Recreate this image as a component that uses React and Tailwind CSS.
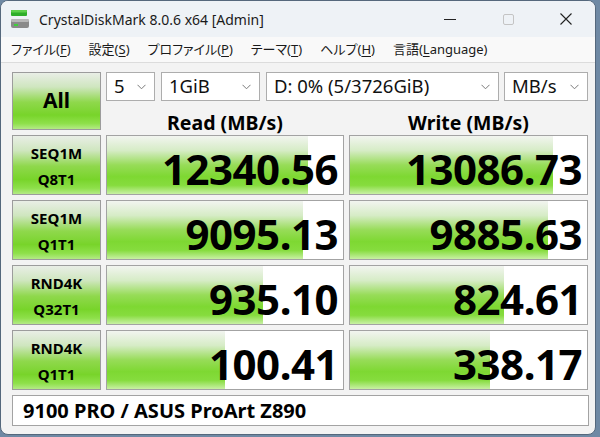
const rows = [
  { a: "SEQ1M", b: "Q8T1", read: "12340.56", rf: 0.85, write: "13086.73", wf: 0.856 },
  { a: "SEQ1M", b: "Q1T1", read: "9095.13", rf: 0.83, write: "9885.63", wf: 0.835 },
  { a: "RND4K", b: "Q32T1", read: "935.10", rf: 0.66, write: "824.61", wf: 0.65 },
  { a: "RND4K", b: "Q1T1", read: "100.41", rf: 0.5, write: "338.17", wf: 0.59 },
];

const menu = [
  ["ファイル(", "F", ")"],
  ["設定(", "S", ")"],
  ["プロファイル(", "P", ")"],
  ["テーマ(", "T", ")"],
  ["ヘルプ(", "H", ")"],
  ["言語(", "L", "anguage)"],
];

function Chevron() {
  return (
    <svg width="9" height="6" viewBox="0 0 9 6" className="shrink-0">
      <path d="M0.5 0.8 L4.5 4.8 L8.5 0.8" fill="none" stroke="#7a7a7a" strokeWidth="1" />
    </svg>
  );
}

function Select({ w, label }) {
  return (
    <div
      className={`${w} h-[29px] bg-white border border-[#adadad] flex items-center justify-between pl-[7px] pr-[8px] text-[18.5px] leading-none text-[#111]`}
    >
      <span>{label}</span>
      <Chevron />
    </div>
  );
}

function Cell({ value, frac }) {
  return (
    <div className="relative h-[60px] bg-white border border-[#a3a3a3] overflow-hidden">
      <div
        className="absolute left-0 top-0 bottom-0 bg-[linear-gradient(180deg,#f2f5f0_0%,#d6ecc6_25%,#97dc58_50%,#7ed832_70%,#86dc3e_85%,#c8f0a4_100%)]"
        style={{ width: `${frac * 100}%` }}
      />
      <div className="relative h-full flex items-center justify-end pr-[5px] pt-[7px] text-[42px] font-bold leading-none text-black tracking-[-0.5px]">
        {value}
      </div>
    </div>
  );
}

function GreenBox({ children, className = "" }) {
  return (
    <div
      className={`border border-[#9c9c9c] bg-[linear-gradient(180deg,#e9eee6_0%,#cfe6bf_25%,#8fd84c_52%,#78d42a_75%,#8ee04a_90%,#b4ea86_100%)] flex flex-col items-center justify-center text-black font-bold ${className}`}
    >
      {children}
    </div>
  );
}

export default function App() {
  return (
    <div className="w-[600px] h-[437px] bg-[#6f89a4] overflow-hidden font-['Noto_Sans','Noto_Sans_CJK_JP',sans-serif]">
      <div className="w-[596px] h-[435px] rounded-[8px] border border-[#55687c] bg-[#f3f3f3] overflow-hidden flex flex-col">
        {/* title bar */}
        <div className="h-[36px] bg-[#eef2f6] flex items-center pl-[9px] shrink-0">
          <svg width="20" height="20" viewBox="0 0 20 20" className="shrink-0">
            <rect x="1" y="1" width="16" height="6" rx="1" fill="#2fae2a" />
            <rect x="1" y="1" width="16" height="2.5" rx="1" fill="#5fd04c" />
            <rect x="1" y="10" width="18" height="9" rx="2" fill="#8a8a8a" />
            <rect x="1" y="10" width="18" height="3" rx="1.5" fill="#b8b8b8" />
            <rect x="4" y="15" width="4" height="2" fill="#3fcf3a" />
          </svg>
          <span className="ml-[9px] text-[14px] text-[#1a1a1a]">CrystalDiskMark 8.0.6 x64 [Admin]</span>
          <div className="ml-auto flex items-center h-full">
            <div className="w-[58px] h-full flex items-center justify-center">
              <div className="w-[12px] h-[1px] bg-[#222]" />
            </div>
            <div className="w-[58px] h-full flex items-center justify-center">
              <div className="w-[11px] h-[11px] border border-[#c4c4c4] rounded-[2px]" />
            </div>
            <div className="w-[58px] h-full flex items-center justify-center">
              <svg width="12" height="12" viewBox="0 0 12 12">
                <path d="M0.5 0.5 L11.5 11.5 M11.5 0.5 L0.5 11.5" stroke="#222" strokeWidth="1.1" />
              </svg>
            </div>
          </div>
        </div>

        {/* menu */}
        <div className="h-[26px] bg-[#f9f9f9] border-b border-[#dcdcdc] flex items-center gap-[18px] pl-[10px] text-[13px] text-[#1a1a1a] shrink-0 [font-feature-settings:'palt']">
          {menu.map(([pre, key, post]) => (
            <span key={pre}>
              {pre}
              <span className="underline underline-offset-2">{key}</span>
              {post}
            </span>
          ))}
        </div>

        {/* content */}
        <div className="pl-[11px] pt-[9px] flex flex-col gap-[5px]">
          <div className="grid grid-cols-[89px_238px_239px] gap-x-[5px] gap-y-[5px] grid-rows-[58px_60px_60px_60px_60px]">
            <GreenBox className="h-[58px] text-[21px]">All</GreenBox>
            <div className="col-span-2 flex flex-col">
              <div className="flex">
                <Select w="w-[49px]" label="5" />
                <div className="w-[6px]" />
                <Select w="w-[99px]" label="1GiB" />
                <div className="w-[6px]" />
                <Select w="w-[233px]" label="D: 0% (5/3726GiB)" />
                <div className="w-[5px]" />
                <Select w="w-[84px]" label="MB/s" />
              </div>
              <div className="grid grid-cols-[238px_239px] gap-x-[5px] pt-[10px] text-[19.5px] font-bold leading-[24px] text-black">
                <div className="text-center">Read (MB/s)</div>
                <div className="text-center">Write (MB/s)</div>
              </div>
            </div>

            {rows.map((r, i) => (
              <div key={i} className="contents">
                <GreenBox className="h-[60px] text-[15px] leading-[26px] pt-[1px]">
                  <span>{r.a}</span>
                  <span>{r.b}</span>
                </GreenBox>
                <Cell value={r.read} frac={r.rf} />
                <Cell value={r.write} frac={r.wf} />
              </div>
            ))}
          </div>

          <div className="w-[577px] h-[31px] bg-white border border-[#a3a3a3] flex items-center pl-[10px] text-[20px] font-bold text-black">
            9100 PRO / ASUS ProArt Z890
          </div>
        </div>
      </div>
    </div>
  );
}
